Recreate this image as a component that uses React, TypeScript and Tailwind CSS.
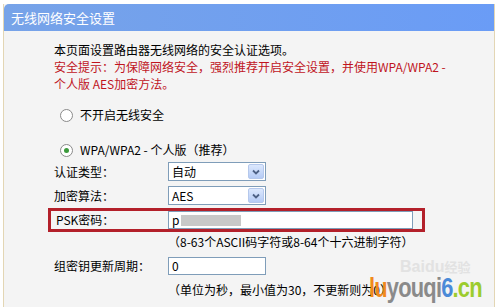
import React from 'react';

const font = "font-['SimSun','Noto_Sans_CJK_SC',sans-serif]";

const Radio: React.FC<{ checked?: boolean }> = ({ checked }) => (
  <span className="w-[13px] h-[13px] rounded-full border border-[#8a8a8a] bg-white flex items-center justify-center shrink-0">
    {checked && <span className="w-[5px] h-[5px] rounded-full bg-[#3c9a3c]" />}
  </span>
);

const Select: React.FC<{ value: string }> = ({ value }) => (
  <div className="w-[98px] h-[19px] border border-[#7f9db9] bg-white flex items-center">
    <span className="flex-1 pl-[3px] text-[12px] leading-none">{value}</span>
    <span className="w-[16px] h-[15px] mr-[1px] bg-gradient-to-b from-[#dce8fd] to-[#b5cbf5] border border-[#b5c8ec] rounded-[2px] flex items-center justify-center">
      <svg width="8" height="6" viewBox="0 0 8 6">
        <path d="M1 1.5 L4 4.5 L7 1.5" fill="none" stroke="#4d6185" strokeWidth="1.8" />
      </svg>
    </span>
  </div>
);

const TextInput: React.FC<{ width: string; children?: React.ReactNode }> = ({ width, children }) => (
  <div className={`${width} h-[18px] border border-[#7f9db9] bg-white flex items-center pl-[3px] text-[12px] leading-none`}>
    {children}
  </div>
);

export default function App() {
  return (
    <div className={`w-[500px] h-[307px] bg-white overflow-hidden relative ${font} text-black`}>
      <div className="ml-[3px] mt-[4px] w-[492px] h-[303px] border-l border-r border-[#e3d6b4] bg-[#f4f4f4] flex flex-col">
        <div className="h-[27px] bg-gradient-to-r from-[#77a3e8] to-[#6a9cf6] rounded-tl-[5px] flex items-center pl-[7px] text-white text-[13px]">
          无线网络安全设置
        </div>

        <div className="pl-[50px] pt-[10px] text-[12px] leading-[17px]">
          <div>本页面设置路由器无线网络的安全认证选项。</div>
          <div className="text-[#c0141e]">安全提示：为保障网络安全，强烈推荐开启安全设置，并使用WPA/WPA2 -</div>
          <div className="text-[#c0141e]">个人版 AES加密方法。</div>
        </div>

        <div className="pl-[56px] mt-[14px] h-[18px] flex items-center gap-[7px] text-[12px]">
          <Radio />
          <span>不开启无线安全</span>
        </div>

        <div className="pl-[56px] mt-[17px] h-[18px] flex items-center gap-[7px] text-[12px]">
          <Radio checked />
          <span>WPA/WPA2 - 个人版（推荐）</span>
        </div>

        <div className="pl-[50px] mt-[3px] flex items-center text-[12px]">
          <span className="w-[114px]">认证类型：</span>
          <Select value="自动" />
        </div>

        <div className="pl-[50px] mt-[5px] flex items-center text-[12px]">
          <span className="w-[114px]">加密算法：</span>
          <Select value="AES" />
        </div>

        <div className="ml-[44px] mt-[3px] w-[377px] h-[24px] border-[3px] border-[#b3202a] flex items-center text-[12px]">
          <span className="w-[117px] pl-[5px]">PSK密码：</span>
          <TextInput width="w-[245px]">
            <span>p</span>
            <span className="ml-[2px] w-[60px] h-[11px] bg-[#c8c8c8]" />
          </TextInput>
        </div>

        <div className="pl-[164px] mt-[2px] h-[16px] flex items-center text-[12px]">
          （8-63个ASCII码字符或8-64个十六进制字符）
        </div>

        <div className="pl-[50px] mt-[7px] flex items-center text-[12px]">
          <span className="w-[114px]">组密钥更新周期：</span>
          <TextInput width="w-[98px]">0</TextInput>
        </div>

        <div className="pl-[164px] mt-[7px] h-[16px] flex items-center text-[12px]">
          （单位为秒，最小值为30，不更新则为0）
        </div>
      </div>

      <div className="absolute left-[400px] top-[259px] text-[#e2e2e2] text-[16px] font-['Liberation_Sans',sans-serif] font-bold leading-none">
        Baidu<span className="text-[13px] font-['Noto_Sans_CJK_SC',sans-serif]">经验</span>
      </div>
      <div className="absolute left-[369px] top-[274px] text-[28px] font-['Liberation_Sans',sans-serif] font-bold leading-none tracking-[-1px] scale-x-[0.78] origin-left">
        <span className="text-[#f08a1c]">lu</span>
        <span className="text-[#8a8a8a]">youqi</span>
        <span className="text-[#4a8ad8]">6</span>
        <span className="text-[#9ccc2e]">.cn</span>
      </div>
    </div>
  );
}
